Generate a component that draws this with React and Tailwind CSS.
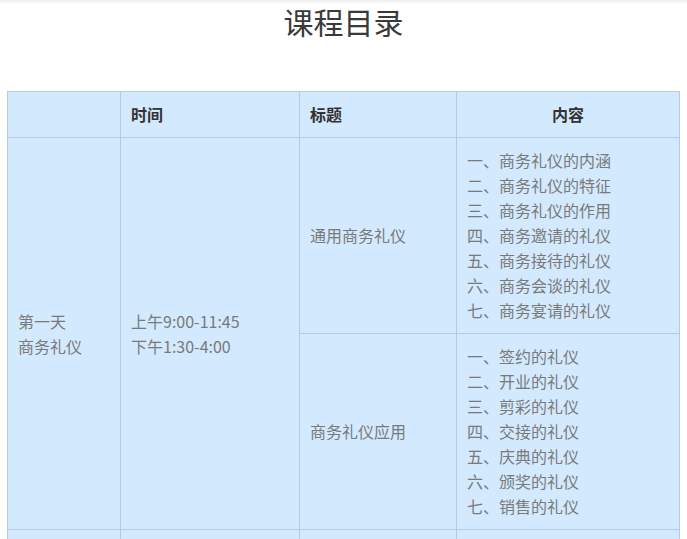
import React from "react";

const font = { fontFamily: '"Microsoft YaHei", "Noto Sans CJK SC", "Noto Sans", sans-serif' };

const days = [
  {
    day: ["第一天", "商务礼仪"],
    time: ["上午9:00-11:45", "下午1:30-4:00"],
    topics: [
      {
        title: "通用商务礼仪",
        items: [
          "一、商务礼仪的内涵",
          "二、商务礼仪的特征",
          "三、商务礼仪的作用",
          "四、商务邀请的礼仪",
          "五、商务接待的礼仪",
          "六、商务会谈的礼仪",
          "七、商务宴请的礼仪",
        ],
      },
      {
        title: "商务礼仪应用",
        items: [
          "一、签约的礼仪",
          "二、开业的礼仪",
          "三、剪彩的礼仪",
          "四、交接的礼仪",
          "五、庆典的礼仪",
          "六、颁奖的礼仪",
          "七、销售的礼仪",
        ],
      },
    ],
  },
  {
    day: ["第二天", "职业形象"],
    time: ["上午9:00-11:45", "下午1:30-4:00"],
    topics: [
      {
        title: "仪容仪表礼仪",
        items: [
          "一、仪容的礼仪",
          "二、着装的礼仪",
          "三、饰品的礼仪",
          "四、仪态的礼仪",
          "五、表情的礼仪",
          "六、举止的礼仪",
          "七、谈吐的礼仪",
        ],
      },
    ],
  },
];

const cell = "border border-[#b7cbe0] px-[10px] py-[10px] align-middle";

export default function App() {
  return (
    <div className="min-h-screen bg-white" style={font}>
      <div className="h-[4px] bg-gradient-to-b from-[#ececec] to-white" />
      <h1 className="text-center text-[30px] leading-[34px] text-[#3a3a3a]">课程目录</h1>

      <div className="px-[7px] pt-[53px]">
        <table className="w-[673px] border-collapse border border-[#9aa3ad] bg-[#d3e9fd] text-[16px] leading-[25px]">
          <thead>
            <tr className="text-[#333] font-bold">
              <th className={`${cell} w-[113px] text-left`}></th>
              <th className={`${cell} w-[179px] text-left`}>时间</th>
              <th className={`${cell} w-[157px] text-left`}>标题</th>
              <th className={`${cell} text-center`}>内容</th>
            </tr>
          </thead>
          <tbody className="text-[#7a7a7a]">
            {days.map((d, di) =>
              d.topics.map((t, ti) => (
                <tr key={`${di}-${ti}`}>
                  {ti === 0 && (
                    <td className={cell} rowSpan={d.topics.length}>
                      {d.day.map((l) => (
                        <div key={l}>{l}</div>
                      ))}
                    </td>
                  )}
                  {ti === 0 && (
                    <td className={cell} rowSpan={d.topics.length}>
                      {d.time.map((l) => (
                        <div key={l}>{l}</div>
                      ))}
                    </td>
                  )}
                  <td className={cell}>{t.title}</td>
                  <td className={cell}>
                    {t.items.map((it) => (
                      <div key={it}>{it}</div>
                    ))}
                  </td>
                </tr>
              ))
            )}
          </tbody>
        </table>
      </div>
    </div>
  );
}
